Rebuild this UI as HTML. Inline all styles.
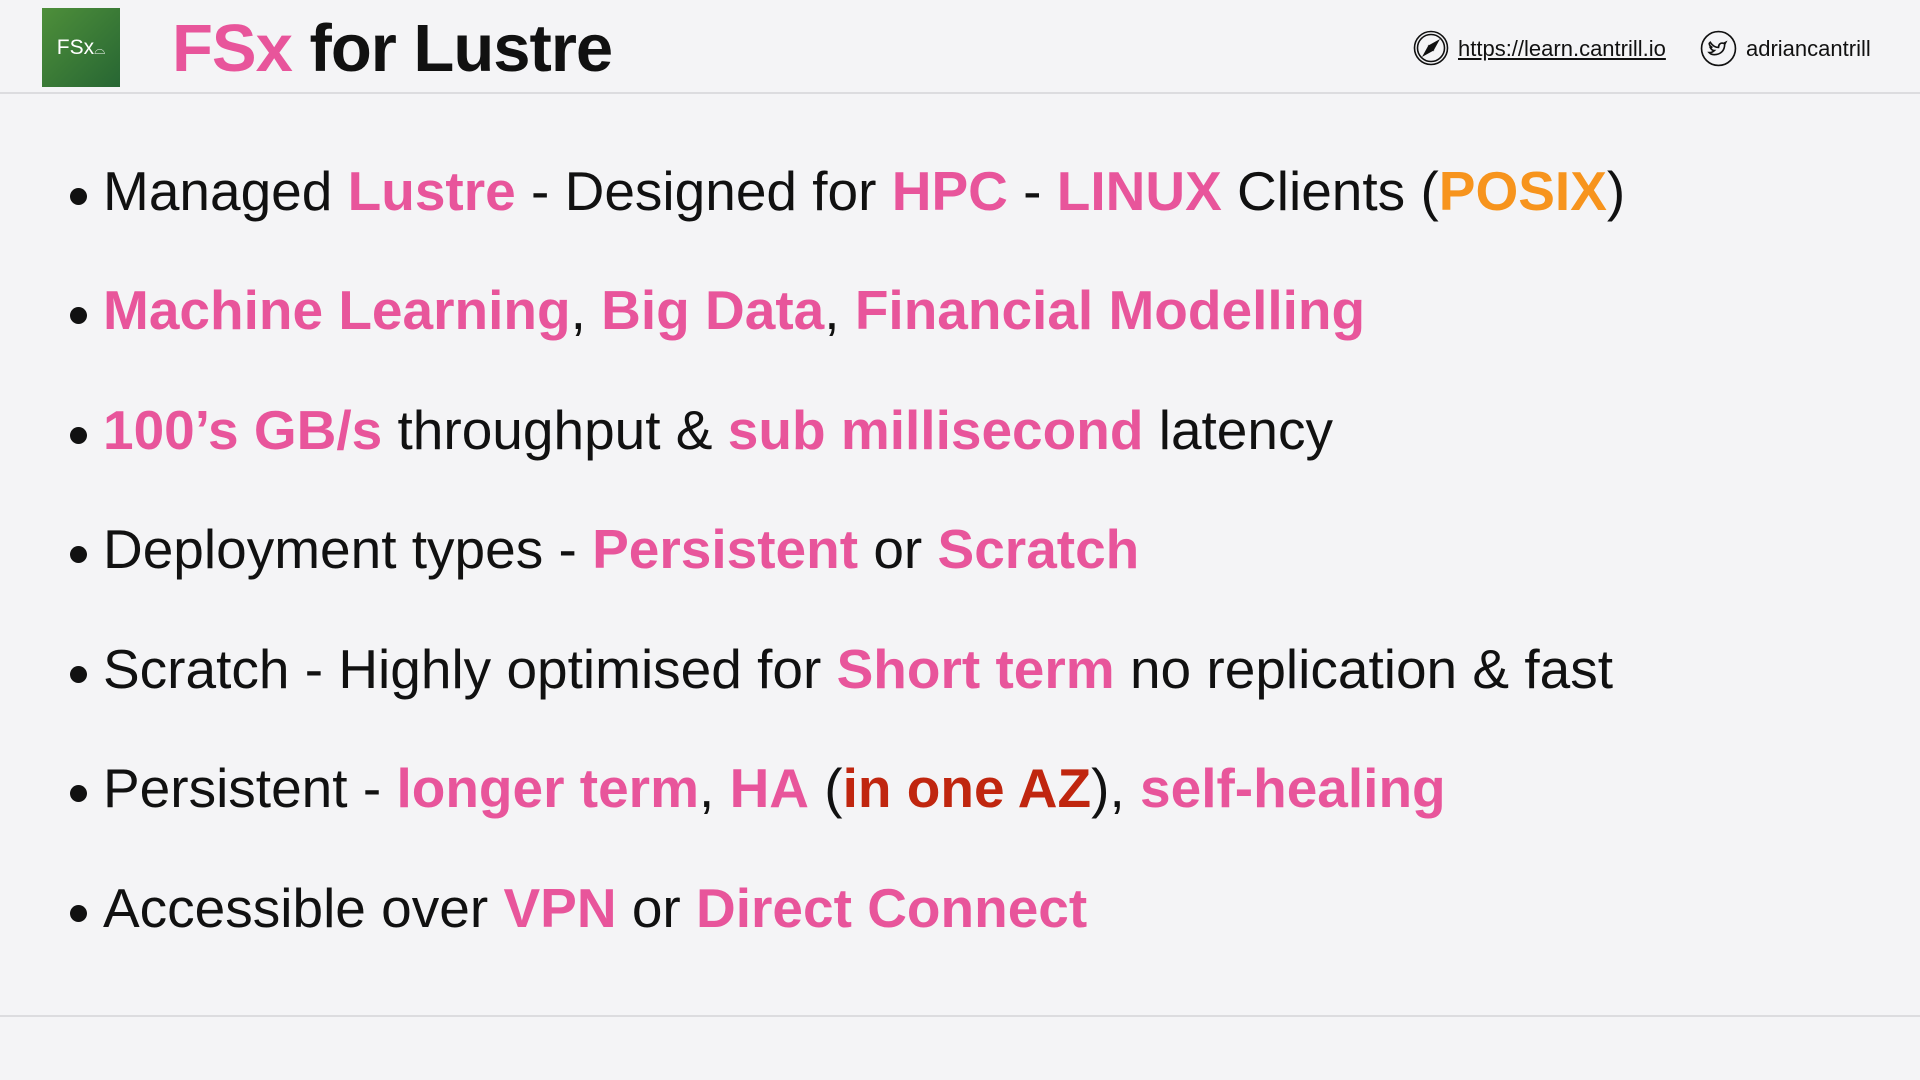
<!DOCTYPE html>
<html><head><style>
body{margin:0;width:1920px;height:1080px;background:#f4f4f6;font-family:"Liberation Sans",sans-serif;position:relative;overflow:hidden}
.hdr{position:absolute;left:0;top:0;width:1920px;height:92px;border-bottom:2px solid #dcdcdf}
.logo{position:absolute;left:42px;top:8px;width:78px;height:79px;background:linear-gradient(135deg,#4e8f3a,#276633);color:#fff;font-size:21px;line-height:79px;text-align:center}
.title{position:absolute;left:172px;top:10px;font-size:67px;font-weight:bold;color:#111;letter-spacing:-1px}
.p{color:#e8559b}.o{color:#f7941d}.r{color:#c0260f}
.links{position:absolute;top:36px;font-size:22px;color:#111}
.foot{position:absolute;left:0;top:1015px;width:1920px;height:2px;background:#dcdcdf}
.b{position:absolute;left:70px;font-size:55px;color:#111;white-space:nowrap}
.b::before{content:"";position:absolute;left:0;top:29px;width:17px;height:17px;border-radius:50%;background:#111}
.b span.t{margin-left:33px}
.b b{font-weight:bold}
</style></head><body>
<div class="hdr">
<div class="logo">FSx<span style="font-size:14px">⌓</span></div>
<div class="title"><span class="p">FSx</span> for Lustre</div>
<svg style="position:absolute;left:1413px;top:30px" width="36" height="36" viewBox="0 0 36 36" fill="none" stroke="#111" stroke-width="1.6"><circle cx="18" cy="18" r="16.5"/><circle cx="18" cy="18" r="13.5"/><path d="M25 11 L20 20 L16 16 Z M11 25 L16 16 L20 20 Z" fill="#111"/></svg>
<div class="links" style="left:1458px;text-decoration:underline">https://learn.cantrill.io</div>
<svg style="position:absolute;left:1700px;top:30px" width="37" height="37" viewBox="0 0 36 36" fill="none" stroke="#111" stroke-width="1.6"><circle cx="18" cy="18" r="16.5"/><path d="M10 12c2 3 5 5 8 5 0-3 2-5 5-4l2-1-1 2c0 6-4 10-10 10-2 0-4-1-5-2 2 0 4-1 5-2-2 0-3-1-4-3 1 0 1 0 2 0-2-1-3-2-3-4z"/></svg>
<div class="links" style="left:1746px">adriancantrill</div>
</div>
<div class="b" style="top:159px"><span class="t">Managed <b class="p">Lustre</b> - Designed for <b class="p">HPC</b> - <b class="p">LINUX</b> Clients (<b class="o">POSIX</b>)</span></div>
<div class="b" style="top:278px"><span class="t"><b class="p">Machine Learning</b>, <b class="p">Big Data</b>, <b class="p">Financial Modelling</b></span></div>
<div class="b" style="top:398px"><span class="t"><b class="p">100’s GB/s</b> throughput &amp; <b class="p">sub millisecond</b> latency</span></div>
<div class="b" style="top:517px"><span class="t">Deployment types - <b class="p">Persistent</b> or <b class="p">Scratch</b></span></div>
<div class="b" style="top:637px"><span class="t">Scratch - Highly optimised for <b class="p">Short term</b> no replication &amp; fast</span></div>
<div class="b" style="top:756px"><span class="t">Persistent - <b class="p">longer term</b>, <b class="p">HA</b> (<b class="r">in one AZ</b>), <b class="p">self-healing</b></span></div>
<div class="b" style="top:876px"><span class="t">Accessible over <b class="p">VPN</b> or <b class="p">Direct Connect</b></span></div>
<div class="foot"></div>
</body></html>
